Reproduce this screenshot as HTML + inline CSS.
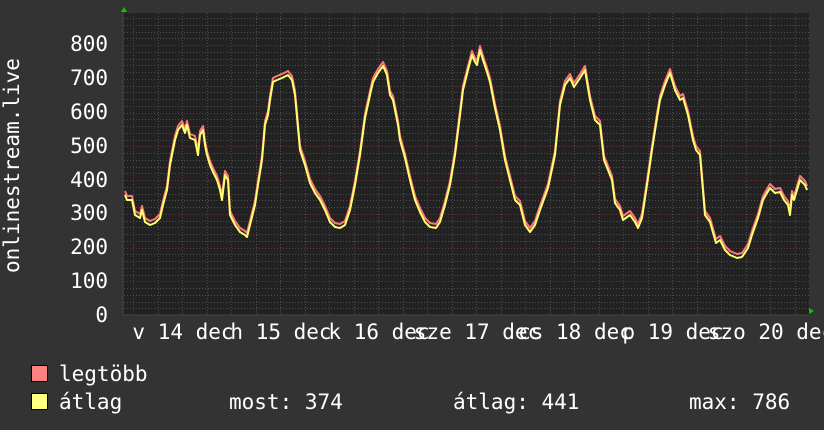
<!DOCTYPE html>
<html><head><meta charset="utf-8"><style>
html,body{margin:0;padding:0;background:#333;}
svg{display:block}
text{font-family:"DejaVu Sans Mono","Liberation Mono",monospace;font-size:21px;fill:#fff}
</style></head><body>
<svg id="s" width="824" height="430" xmlns="http://www.w3.org/2000/svg">
<rect width="824" height="430" fill="#333"/>
<rect x="123" y="13" width="686" height="302" fill="#222"/>
<g id="grid"></g>
<path id="red" fill="none" stroke="#ff7878" stroke-width="2" stroke-linejoin="round"/>
<path id="yel" fill="none" stroke="#ffff70" stroke-width="2" stroke-linejoin="round"/>
<line x1="123" y1="13" x2="123" y2="315" stroke="#444" stroke-width="1"/>
<line x1="123" y1="315" x2="809" y2="315" stroke="#444" stroke-width="1"/>
<polygon points="121,12 127,12 124,7" fill="#0c0"/>
<polygon points="809,308 809,314 814,311" fill="#0c0"/>
<g text-anchor="end">
<text x="108" y="322">0</text><text x="108" y="288">100</text><text x="108" y="254">200</text>
<text x="108" y="220">300</text><text x="108" y="187">400</text><text x="108" y="153">500</text>
<text x="108" y="119">600</text><text x="108" y="85">700</text><text x="108" y="51">800</text>
</g>
<text transform="translate(19,273) rotate(-90)">onlinestream.live</text>
<g text-anchor="middle">
<text x="183" y="339">v 14 dec</text>
<text x="281" y="339">h 15 dec</text>
<text x="379" y="339">k 16 dec</text>
<text x="477" y="339">sze 17 dec</text>
<text x="575" y="339">cs 18 dec</text>
<text x="673" y="339">p 19 dec</text>
<text x="771" y="339">szo 20 dec</text>
</g>
<rect x="31.5" y="365.5" width="16" height="16" fill="#ff8080" stroke="#000"/>
<rect x="31.5" y="393.5" width="16" height="16" fill="#ffff80" stroke="#000"/>
<text x="59" y="381">legtöbb</text>
<text x="59" y="409">átlag</text>
<text x="229" y="409">most: 374</text>
<text x="453" y="409">átlag: 441</text>
<text x="689" y="409">max: 786</text>
</svg>
<script>
var ns="http://www.w3.org/2000/svg",g=document.getElementById("grid");
function ln(x1,y1,x2,y2,c){var l=document.createElementNS(ns,"line");l.setAttribute("x1",x1);l.setAttribute("y1",y1);l.setAttribute("x2",x2);l.setAttribute("y2",y2);l.setAttribute("stroke",c);l.setAttribute("stroke-width","1");l.setAttribute("stroke-dasharray","1,2");g.appendChild(l);}
for(var i=1;i<=44;i++){var y=Math.round(315-i*6.75)+0.5;if(y<14)break;ln(124,y,809,y,i%5==0?"#6e3535":"#4e4e4e");}
for(var k=-1;k<30;k++){var x=133+k*24.5;if(x<124||x>809)continue;x=Math.round(x)+0.5;ln(x,13,x,315,(k%4==0)?"#6e3535":"#4e4e4e");}
var p=[[125,195],[127,200],[132,200],[135,215],[140,218],[142,210],[145,222],[150,225],[155,223],[160,218],[163,205],[167,190],[170,165],[175,140],[178,130],[182,125],[185,133],[187,125],[190,138],[195,140],[198,155],[200,135],[203,130],[205,145],[207,155],[210,165],[213,172],[217,180],[220,190],[222,200],[225,175],[228,180],[230,215],[235,225],[240,232],[245,235],[247,237],[250,225],[255,205],[258,185],[262,160],[265,125],[268,115],[270,100],[273,82],[277,80],[282,78],[288,75],[292,80],[295,95],[298,128],[300,150],[305,165],[310,183],[315,193],[320,200],[325,210],[330,222],[335,227],[340,228],[345,225],[350,210],[355,185],[360,155],[365,118],[370,95],[373,82],[378,73],[383,66],[387,75],[390,95],[393,100],[398,125],[400,140],[405,158],[410,180],[415,200],[420,212],[425,222],[430,227],[436,228],[440,222],[445,205],[450,185],[455,155],[460,115],[463,90],[468,70],[472,55],[475,62],[477,65],[480,50],[483,60],[487,72],[490,82],[495,108],[500,130],[505,160],[510,180],[515,200],[520,205],[525,225],[530,232],[535,225],[540,210],[548,188],[555,155],[560,105],[565,85],[570,78],[574,87],[580,78],[585,70],[590,100],[595,120],[600,125],[604,160],[608,170],[612,180],[615,203],[620,210],[623,220],[630,215],[635,222],[638,228],[642,218],[647,185],[652,150],[657,118],[660,100],[665,85],[670,73],[675,90],[680,100],[683,98],[688,115],[693,140],[696,150],[700,155],[705,215],[710,222],[716,243],[720,240],[725,250],[730,255],[737,258],[742,257],[748,248],[752,235],[758,218],[763,200],[767,193],[770,188],[775,193],[780,192],[784,200],[788,205],[790,215],[792,195],[794,200],[797,190],[800,180],[805,185],[807,190]];
function d(o){return "M"+p.map(function(q){return q[0]+","+(q[1]-o)}).join("L");}
document.getElementById("yel").setAttribute("d",d(0));
document.getElementById("red").setAttribute("d",d(4));
</script>
</body></html>
